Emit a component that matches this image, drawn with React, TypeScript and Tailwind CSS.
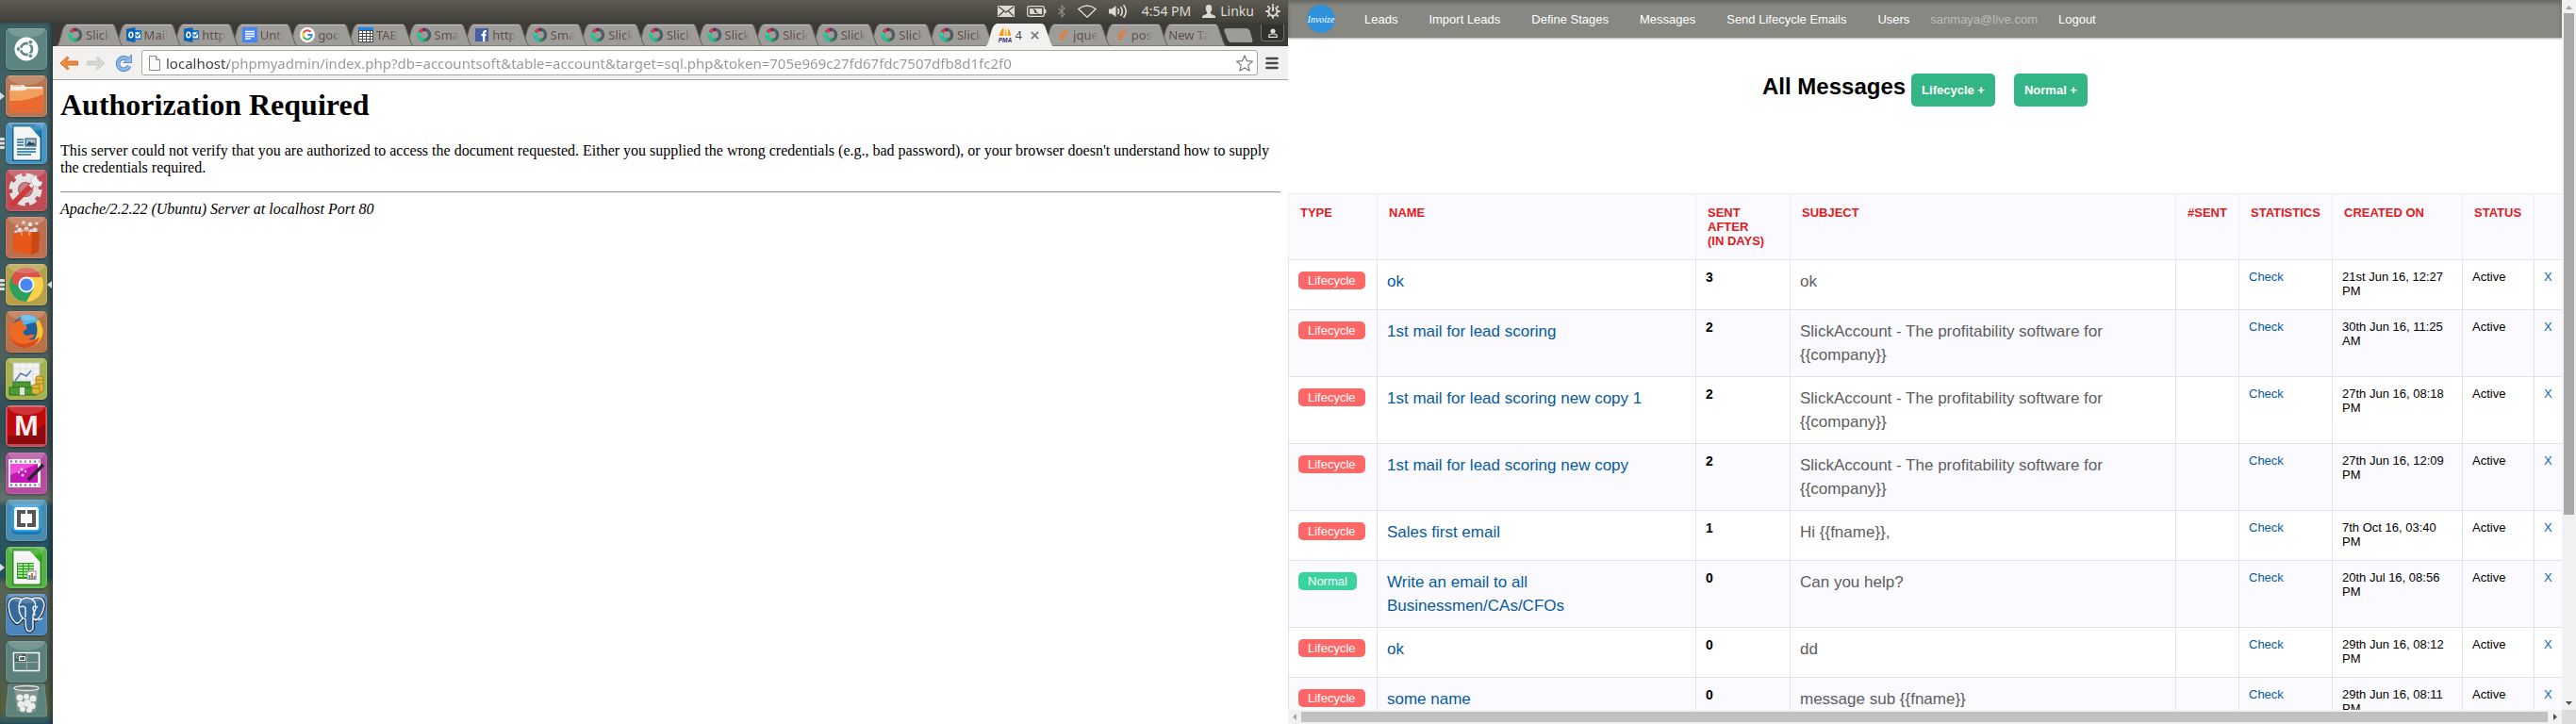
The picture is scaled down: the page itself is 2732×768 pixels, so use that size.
import type { ReactNode } from "react";

const UI = "font-['Noto_Sans','Open_Sans',sans-serif]";

/* ---------- Favicons ---------- */

function RingIcon() {
  return (
    <svg viewBox="0 0 16 16" className="size-4 shrink-0" fill="none" strokeWidth="3.4" aria-hidden="true">
      <circle cx="8" cy="8" r="5.6" stroke="#4a5e68" />
      <path d="M8 13.6A5.6 5.6 0 0 1 2.4 8" stroke="#1fc79b" />
      <path d="M2.4 8A5.6 5.6 0 0 1 3.2 5.1" stroke="#26d6a4" />
      <path d="M3.2 5.1A5.6 5.6 0 0 1 6.6 2.6" stroke="#e8304f" />
      <path d="M6.6 2.6A5.6 5.6 0 0 1 9 2.5" stroke="#6b2350" />
      <path d="M7 13.5A5.6 5.6 0 0 0 10 13.2" stroke="#2a9c62" />
    </svg>
  );
}

function OutlookIcon() {
  return (
    <svg viewBox="0 0 16 16" className="size-4 shrink-0" aria-hidden="true">
      <rect x="7" y="3" width="9" height="10" fill="#1173c7" />
      <path d="M8.5 5.2h6.5v6.2H8.500z" fill="#fff" />
      <path d="M10 7.500l1.800 1.800L15 5.600" stroke="#1173c7" strokeWidth="1.400" fill="none" />
      <path d="M0 1.800L9.500 0v16L0 14.200z" fill="#0a64b4" />
      <ellipse cx="4.800" cy="8" rx="2" ry="2.700" stroke="#fff" strokeWidth="1.500" fill="none" />
    </svg>
  );
}

function DocIcon() {
  return (
    <svg viewBox="0 0 16 16" className="size-4 shrink-0" aria-hidden="true">
      <rect width="16" height="16" fill="#4486f5" />
      <path d="M3 4.500h10M3 7h10M3 9.500h10M3 12h6" stroke="#fff" strokeWidth="1.300" />
    </svg>
  );
}

function GoogleIcon() {
  return (
    <svg viewBox="0 0 16 16" className="size-4 shrink-0" fill="none" strokeWidth="2" aria-hidden="true">
      <circle cx="8" cy="8" r="8" fill="#fff" />
      <path d="M11.400 4.700A4.700 4.700 0 0 0 3.900 5.700" stroke="#ea4335" />
      <path d="M3.900 5.700A4.700 4.700 0 0 0 3.900 10.300" stroke="#fbbc05" />
      <path d="M3.900 10.300A4.700 4.700 0 0 0 11 11.600" stroke="#34a853" />
      <path d="M11 11.600A4.700 4.700 0 0 0 12.700 8H8.200" stroke="#4285f4" />
    </svg>
  );
}

function TableIcon() {
  return (
    <svg viewBox="0 0 16 16" className="size-4 shrink-0" aria-hidden="true">
      <rect width="16" height="16" fill="#4c4c4c" />
      <rect width="16" height="3" fill="#1c86ee" />
      {[4, 7, 10, 13].map((y) =>
        [1, 5, 9, 13].map((x) => <rect key={`${x}-${y}`} x={x} y={y} width={x === 13 ? 2 : 3} height="2" fill="#fff" />)
      )}
    </svg>
  );
}

function FacebookIcon() {
  return (
    <svg viewBox="0 0 16 16" className="size-4 shrink-0" aria-hidden="true">
      <rect x="1" y="1" width="14" height="14" fill="#4560a5" />
      <path d="M13 4.200h-1.500q-1.300 0-1.300 1.400V15M7.500 8.200h5" stroke="#fff" strokeWidth="2.200" fill="none" />
    </svg>
  );
}

function PmaIcon() {
  return (
    <svg viewBox="0 0 16 16" className="size-4 shrink-0" aria-hidden="true">
      <path d="M6.500 0v9H1.500C2.500 5 4.500 2 6.500 0z" fill="#f89c0e" />
      <path d="M8 1c1.500 2 2 5 2 8H7.500z" fill="#fbb743" />
      <path d="M11 1c2 2 3 5 3 8h-3z" fill="#f89c0e" />
      <text x="8" y="15.500" fontSize="6.500" fontWeight="bold" fontStyle="italic" textAnchor="middle" fill="#2d2f73" fontFamily="Liberation Sans, sans-serif">PMA</text>
    </svg>
  );
}

function StackIcon() {
  return (
    <svg viewBox="0 0 16 16" className="size-4 shrink-0" fill="none" aria-hidden="true">
      <path d="M2.500 10v4.500h8.500V10" stroke="#a6a29e" strokeWidth="1.200" />
      <path d="M4 12.600h5.500M4.200 10.300l5.400.6M4.900 7.800l5.100 1.500M6.400 5.200l4.400 2.900M8.900 2.800l3.200 4.300M12 1.500l.9 5" stroke="#e8792a" strokeWidth="1.300" />
    </svg>
  );
}

type Tab = { icon: ReactNode; label: string; active?: boolean };

const ring = <RingIcon />;
const tabs: Tab[] = [
  { icon: ring, label: "Slick" },
  { icon: <OutlookIcon />, label: "Mail" },
  { icon: <OutlookIcon />, label: "http" },
  { icon: <DocIcon />, label: "Unti" },
  { icon: <GoogleIcon />, label: "goo" },
  { icon: <TableIcon />, label: "TAB" },
  { icon: ring, label: "Sma" },
  { icon: <FacebookIcon />, label: "http" },
  { icon: ring, label: "Sma" },
  { icon: ring, label: "Slick" },
  { icon: ring, label: "Slick" },
  { icon: ring, label: "Slick" },
  { icon: ring, label: "Slick" },
  { icon: ring, label: "Slick" },
  { icon: ring, label: "Slick" },
  { icon: ring, label: "Slick" },
  { icon: <PmaIcon />, label: "4", active: true },
  { icon: <StackIcon />, label: "jque" },
  { icon: <StackIcon />, label: "pos" },
  { icon: null, label: "New Ta" },
];

function BrowserTab({ tab, order }: { tab: Tab; order: number }) {
  return (
    <button
      type="button"
      role="tab"
      aria-selected={!!tab.active}
      className="relative flex h-6 min-w-0 flex-1 items-center text-left"
      style={{ zIndex: tab.active ? 40 : order }}
    >
      <svg viewBox="0 0 71 24" preserveAspectRatio="none" className="absolute inset-y-0 left-0 h-6 w-[calc(100%+9px)]" aria-hidden="true">
        <path
          d="M0 24C4 23 5 3 10 1Q10.500.5 12 .5H59Q61 .5 62 2.500L68 20Q69 23 71 24z"
          fill={tab.active ? "#f2f1f0" : "#9e9c99"}
          stroke={tab.active ? "#f2f1f0" : "#5f5d59"}
          strokeWidth="1"
        />
        {!tab.active && <path d="M11 1.500H60" stroke="#c2c1bf" />}
      </svg>
      <span className={`relative flex min-w-0 items-center gap-[3px] ${tab.icon ? "pl-3" : "pl-[9px]"}`}>
        {tab.icon}
        <span
          className={`overflow-hidden whitespace-nowrap text-[13px] leading-5 ${
            tab.active ? "text-[#4c4c4c]" : "bg-[linear-gradient(to_right,#5b4c44_65%,#9e9c99)] bg-clip-text text-transparent"
          } ${tab.icon ? "max-w-[29px]" : "max-w-12"}`}
        >
          {tab.label}
        </span>
        {tab.active && (
          <svg viewBox="0 0 9 9" className="ml-[6px] size-[9px] shrink-0" stroke="#7b7b7b" strokeWidth="1.800" aria-hidden="true">
            <path d="M.8.8l7.400 7.400M8.200.8L.8 8.200" />
          </svg>
        )}
      </span>
    </button>
  );
}

/* ---------- Launcher ---------- */

function Page({ dark, mid }: { dark: string; mid: string }) {
  return (
    <>
      <path d="M7 2h24l7 7v32H7z" fill={dark} />
      <path d="M9 5h17l10 11v23H9z" fill="#f4f4f4" stroke="#fff" />
      <path d="M24 3h13v12z" fill={mid} />
    </>
  );
}

const launcher: { name: string; tile: string; pips?: number; focus?: boolean; art: ReactNode }[] = [
  {
    name: "Dash",
    tile: "bg-[#5c8581]",
    art: (
      <g fill="none">
        <circle cx="22" cy="22" r="12.500" fill="#fff" />
        <circle cx="22" cy="22" r="6" stroke="#648b87" strokeWidth="2.800" />
        <path d="M22 22L12 22M22 22l5-9M22 22l5 9" stroke="#fff" strokeWidth="1.500" />
        <circle cx="22" cy="22" r="4.200" fill="#fff" />
        <g fill="#648b87" stroke="#fff" strokeWidth="1">
          <circle cx="13.500" cy="22" r="2.400" />
          <circle cx="26.300" cy="14.700" r="2.400" />
          <circle cx="26.300" cy="29.300" r="2.400" />
        </g>
      </g>
    ),
  },
  {
    name: "Files",
    tile: "bg-[#b87650]",
    pips: 1,
    art: (
      <>
        <path d="M5 10h14l2 2h18v8H5z" fill="#f3efec" />
        <path d="M7 11h10" stroke="#f1b9a0" strokeWidth="2" />
        <path d="M4 16h16l3-2h17l-1 25H5z" fill="#f3a05e" />
        <path d="M4.500 27Q22 28 39.700 20L39 39H5z" fill="#ea6a30" />
        <path d="M4 16h16l3-2h17" stroke="#fbc49a" fill="none" />
      </>
    ),
  },
  {
    name: "Writer",
    tile: "bg-[#4795c2]",
    pips: 3,
    art: (
      <>
        <Page dark="#14618f" mid="#1a7db8" />
        <path d="M12 18h7M12 21h7M12 24h7M12 28h20M12 31h20M12 34h15" stroke="#1b6a9a" strokeWidth="1.500" />
        <rect x="21" y="17" width="11" height="8" fill="#8cc8ee" stroke="#1c4d6e" />
        <path d="M22 24l3-4 3 2 2-1 1 3z" fill="#333f43" />
        <circle cx="29" cy="19.500" r="1.200" fill="#f7b733" />
      </>
    ),
  },
  {
    name: "System Settings",
    tile: "bg-[#bd4c55]",
    art: (
      <>
        <circle cx="21" cy="21" r="14.500" fill="none" stroke="#e3e3e3" strokeWidth="6" strokeDasharray="7.400 4" />
        <circle cx="21" cy="21" r="11" fill="none" stroke="#e3e3e3" strokeWidth="6" />
        <circle cx="21" cy="21" r="7" fill="#bd8588" />
        <path d="M8 36L27 17" stroke="#d13a3a" strokeWidth="6" strokeLinecap="round" />
        <path d="M26 18l6-6" stroke="#efefef" strokeWidth="4" />
        <path d="M33 6a6 6 0 1 0 6 7l-4-1-2-3z" fill="#f0f0f0" stroke="#aaa" strokeWidth=".6" />
      </>
    ),
  },
  {
    name: "Software Centre",
    tile: "bg-[#bd6f4f]",
    art: (
      <>
        <g fill="#d9e0e6">
          <circle cx="12" cy="10" r="1.600" /><circle cx="19" cy="6" r="1.800" /><circle cx="26" cy="8" r="2.200" />
          <circle cx="33" cy="7" r="1.600" /><circle cx="15" cy="14" r="2.500" /><circle cx="31" cy="14" r="2.600" /><circle cx="22" cy="13" r="2.400" />
          <circle cx="11" cy="16" r="1.800" /><circle cx="27" cy="15" r="2" />
        </g>
        <path d="M8 17l28-1-1 21-9 3-18-3z" fill="#e5581a" />
        <path d="M28 16l8 0-1 21-8 3z" fill="#c94814" />
        <path d="M17 20v-3q0-3 4-3t4 3v3" fill="none" stroke="#f5a06f" strokeWidth="1.500" />
      </>
    ),
  },
  {
    name: "Chrome",
    tile: "bg-[#b5a14c]",
    pips: 3,
    focus: true,
    art: (
      <>
        <circle cx="22" cy="22" r="18" fill="#fdd04a" />
        <path d="M22 22L6.400 13A18 18 0 0 0 22 40l7.800-13.500z" fill="#2da05a" />
        <path d="M22 22H8L6.400 13A18 18 0 0 1 37.600 13H22z" fill="#d9534b" />
        <path d="M6.400 13l8.600 13 7-12h15.600A18 18 0 0 0 6.400 13z" fill="#d9534b" />
        <circle cx="22" cy="22" r="8.500" fill="#f3f5f8" />
        <circle cx="22" cy="22" r="6.600" fill="#4a88ef" />
      </>
    ),
  },
  {
    name: "Firefox",
    tile: "bg-[#b87148]",
    art: (
      <>
        <circle cx="23" cy="20" r="16" fill="#1f5f9f" />
        <path d="M16 5q12-4 20 6l-10 2-9 3z" fill="#55b6e8" />
        <path d="M35 9q8 11 2 21-6 9-17 9l10-8q6-8 2-19z" fill="#fbc62f" />
        <path d="M5 12q1 2 4 1 4-4 10-4-2 2-1 5 4 1 5 3-1 3-4 4-2 4 4 5 4-2 8-1-2 4-7 5 6 2 12-3-4 13-17 12Q3 36 4 22 4 15 5 12z" fill="#ec6a24" />
        <path d="M36 28q-4 11-16 11Q8 38 5 27q8 11 19 7 8-2 12-6z" fill="#d94a1c" />
      </>
    ),
  },
  {
    name: "Accounts",
    tile: "bg-[#a5b14c]",
    art: (
      <>
        <rect x="8" y="5" width="28" height="24" fill="#f3f4f2" stroke="#b9bcb4" />
        <path d="M8 11h28M8 17h28M8 23h28M15 5v24M22 5v24M29 5v24" stroke="#d9dbd7" strokeWidth=".8" />
        <path d="M10 24l6-8 6 3 5-6" fill="none" stroke="#587ab4" strokeWidth="1.500" />
        <g fill="#4d9b35" stroke="#2b6a1d"><rect x="8" y="25" width="18" height="7" /><rect x="4" y="31" width="28" height="8" /></g>
        <path d="M15 31h5v8h-5z" fill="#e4e4e0" />
        <g fill="#e0bb3a" stroke="#a58118"><rect x="32" y="19" width="8" height="17" rx="2" /><rect x="28" y="28" width="8" height="10" rx="2" /></g>
        <path d="M32 23h8M32 27h8M28 32h8" stroke="#a58118" />
      </>
    ),
  },
  {
    name: "Mega",
    tile: "bg-[#bf4d58]",
    art: (
      <>
        <rect x="2" y="2" width="40" height="39" fill="#c3080c" />
        <path d="M2 33Q26 32 42 20v21H2z" fill="#8e090c" />
        <text x="22" y="32" fontSize="28" fontWeight="bold" textAnchor="middle" fill="#f5efef" fontFamily="Open Sans, sans-serif">M</text>
      </>
    ),
  },
  {
    name: "Screen Recorder",
    tile: "bg-[#b64c9f]",
    art: (
      <>
        <rect x="3" y="7" width="34" height="30" fill="#ececec" />
        <path d="M5 9.500h31M5 34.500h31" stroke="#777" strokeWidth="2" strokeDasharray="2 3" />
        <rect x="5" y="12" width="29" height="20" fill="#c317b5" />
        <path d="M5 12h29L5 24z" fill="#f04ddb" />
        <g fill="#ffd7fb"><circle cx="17" cy="18" r="1.500" /><circle cx="21" cy="20" r="1.200" /><circle cx="14" cy="21" r="1.200" /><circle cx="18" cy="24" r="1.500" /></g>
        <path d="M24 29L40 13" stroke="#25252b" strokeWidth="3.500" />
      </>
    ),
  },
  {
    name: "Brackets",
    tile: "bg-[#4a8bb0]",
    art: (
      <>
        <rect x="6" y="7" width="32" height="30" rx="6" fill="#1577b5" />
        <rect x="6" y="5" width="32" height="29" rx="6" fill="#2f9fe0" />
        <rect x="9" y="8" width="26" height="24" rx="3" fill="#fff" />
        <rect x="12" y="11" width="20" height="18" fill="#565656" />
        <rect x="16" y="15" width="12" height="10" fill="#fff" />
        <path d="M22 11v18" stroke="#fff" strokeWidth="2" />
      </>
    ),
  },
  {
    name: "Calc",
    tile: "bg-[#57b246]",
    pips: 1,
    art: (
      <>
        <Page dark="#258a17" mid="#2fae1c" />
        <rect x="12" y="17" width="18" height="17" fill="#2c9a20" />
        {[18, 21, 24, 27, 30].map((y) => [13, 19, 25].map((x) => <rect key={`${x}-${y}`} x={x} y={y} width="5" height="2" fill="#a4e296" />))}
        <rect x="23" y="26" width="9" height="8.500" fill="#fff" stroke="#8c8c8c" />
        <path d="M25.500 34v-4M30.500 34v-3" stroke="#3d85c9" strokeWidth="2" />
        <path d="M28 34v-6" stroke="#ef6c28" strokeWidth="2" />
      </>
    ),
  },
  {
    name: "pgAdmin",
    tile: "bg-[#4a86bd]",
    art: (
      <g fill="#35699a" stroke="#1b1f24" strokeWidth="3.500" strokeLinejoin="round">
        <path d="M16 5Q4 2 3 12q1 14 8 19 4 1 7-6z" />
        <path d="M28 5Q40 1 41 12q-2 12-9 16l-6-4z" />
        <path d="M14 13q1-9 9-9 9 1 9 11l-3 8v14q-2 4-6 2-2-2-2-12-7-2-7-14z" />
        <g stroke="#e6eef5" strokeWidth="1.500">
          <path d="M16 5Q4 2 3 12q1 14 8 19 4 1 7-6z" />
          <path d="M28 5Q40 1 41 12q-2 12-9 16l-6-4z" />
          <path d="M14 13q1-9 9-9 9 1 9 11l-3 8v14q-2 4-6 2-2-2-2-12-7-2-7-14zM15 14q5-2 6 1v10M34 14q-5-2-5 1l2 8M30 27q5 1 9-1" />
        </g>
      </g>
    ),
  },
  {
    name: "Workspace Switcher",
    tile: "bg-[#5a817b]",
    art: (
      <g fill="none">
        <rect x="8.500" y="12.500" width="27" height="19" stroke="#fff" strokeWidth="1.500" />
        <path d="M22.500 13v18M9 22.500h26" stroke="#a6a9a8" />
        <rect x="9.500" y="13.500" width="12" height="8.500" fill="#44605e" />
        <rect x="11.500" y="15" width="5" height="3" stroke="#8fa3a1" />
        <rect x="14.500" y="16.500" width="6" height="4" stroke="#fff" />
      </g>
    ),
  },
];

function Launcher() {
  return (
    <nav
      aria-label="Launcher"
      className="relative flex w-14 shrink-0 flex-col items-center gap-[6px] overflow-hidden bg-[linear-gradient(to_bottom,#3d6266_0%,#466164_20%,#3f5a5e_33%,#52625c_47%,#33505a_55%,#3a4f55_60%,#65716a_68%,#2f5966_69%,#24505c_79%,#5a6553_80%,#4c5c55_90%,#57603f_98%,#2b5b6a_100%)] pt-[6px] shadow-[inset_-3px_0_4px_rgba(0,0,0,0.4)]"
    >
      {launcher.map((item) => (
        <div key={item.name} className="relative flex w-full shrink-0 justify-center">
          <button
            type="button"
            aria-label={item.name}
            className={`size-11 rounded-[5px] shadow-[inset_0_0_0_1px_rgba(255,255,255,0.14),0_1px_3px_rgba(0,0,0,0.4)] ${item.tile}`}
          >
            <svg viewBox="0 0 44 44" className="size-11 rounded-[5px]" aria-hidden="true">
              {item.art}
              <ellipse cx="22" cy="0" rx="20" ry="10" fill="#fff" opacity=".18" />
            </svg>
          </button>
          {item.pips === 1 && (
            <svg viewBox="0 0 5 8" className="absolute left-0 top-[18px] h-2 w-[5px]" aria-hidden="true"><path d="M0 0l5 4-5 4z" fill="#dcdcdc" /></svg>
          )}
          {item.pips === 3 && (
            <svg viewBox="0 0 5 12" className="absolute left-0 top-4 h-3 w-[5px]" aria-hidden="true"><path d="M0 1.500h4M0 6h4M0 10.500h4" stroke="#dcdcdc" strokeWidth="2.800" strokeLinecap="round" /></svg>
          )}
          {item.focus && (
            <svg viewBox="0 0 5 8" className="absolute right-px top-[18px] h-2 w-[5px]" aria-hidden="true"><path d="M5 0L0 4l5 4z" fill="#dcdcdc" /></svg>
          )}
        </div>
      ))}
      <button type="button" aria-label="Trash" className="-mt-[5px] h-9 w-11 shrink-0">
        <svg viewBox="0 0 44 36" className="h-9 w-11" aria-hidden="true">
          <path d="M5 0h34q2 0 2 2l3 31q0 2-2 2H2q-2 0-2-2L3 2q0-2 2-2z" fill="#5b827c" stroke="#7d9b96" strokeWidth=".8" />
          <path d="M9 5l3 24q10 5 20 0l3-24z" fill="#8b9a98" opacity=".8" />
          <ellipse cx="22" cy="5" rx="13" ry="2.500" fill="#6d7d7a" stroke="#e2e6e5" strokeWidth="1.300" />
          <g fill="#ececec">
            <circle cx="15" cy="15" r="3.500" /><circle cx="22" cy="14" r="3" /><circle cx="29" cy="16" r="3.500" />
            <circle cx="16" cy="22" r="3.500" /><circle cx="23" cy="21" r="4" /><circle cx="28" cy="24" r="3.500" /><circle cx="18" cy="27" r="3" /><circle cx="25" cy="28" r="3" />
          </g>
        </svg>
      </button>
    </nav>
  );
}

/* ---------- Left screen ---------- */

function PanelBar() {
  return (
    <header className={`flex h-6 shrink-0 items-center justify-end bg-linear-to-b from-[#5d5b51] to-[#403f3a] pr-2 text-sm leading-5 text-[#dfdbd2] ${UI}`}>
      <svg viewBox="0 0 18 12" className="h-3 w-[18px]" aria-hidden="true">
        <rect width="18" height="12" fill="#dfdbd2" />
        <path d="M1 1l8 6 8-6M1 11l5.500-5M17 11l-5.500-5" stroke="#494840" fill="none" strokeWidth="1.200" />
      </svg>
      <svg viewBox="0 0 21 12" className="ml-[13px] h-3 w-[21px]" fill="none" aria-hidden="true">
        <rect x=".7" y=".7" width="17.600" height="10.600" rx="2" stroke="#dfdbd2" strokeWidth="1.300" />
        <path d="M19.500 4v4" stroke="#dfdbd2" strokeWidth="2" />
        <rect x="3" y="3" width="13" height="6" fill="#dfdbd2" />
        <path d="M6 2.500l4.500 3-1 .8 4.500 3-6.500-2.300 1-.8z" fill="#33322e" />
      </svg>
      <svg viewBox="0 0 8 14" className="ml-3 h-[14px] w-2" fill="none" stroke="#8e8b83" strokeWidth="1.200" aria-hidden="true">
        <path d="M.5 4l6.500 6-3 3V1l3 3-6.500 6" />
      </svg>
      <svg viewBox="0 0 20 14" className="ml-[13px] h-[14px] w-5" fill="none" stroke="#dfdbd2" strokeWidth="1.300" aria-hidden="true">
        <path d="M.8 4.500Q10-2.500 19.200 4.500L10 13.200z" />
      </svg>
      <svg viewBox="0 0 20 16" className="ml-[13px] h-4 w-5" fill="none" stroke="#dfdbd2" strokeWidth="1.600" aria-hidden="true">
        <path d="M0 5.500h3L7.500 2v12L3 10.500H0z" fill="#dfdbd2" stroke="none" />
        <path d="M9.500 5q2 3 0 6M12.500 3.200q3.500 4.800 0 9.600M15.500 1.200q5.500 6.800 0 13.600" />
      </svg>
      <time className="ml-[15px]">4:54 PM</time>
      <svg viewBox="0 0 14 14" className="ml-3 h-[14px] w-[14px]" fill="#dfdbd2" aria-hidden="true">
        <path d="M7 0q3.300 0 3.300 4 0 2.500-1.500 4v1.500L14 12v2H0v-2l5.200-2.500V8Q3.700 6.500 3.700 4 3.700 0 7 0z" />
      </svg>
      <span className="ml-[5px]">Linku</span>
      <svg viewBox="0 0 16 16" className="ml-3 size-4" fill="none" stroke="#dfdbd2" aria-hidden="true">
        <path d="M5.500 4.300a4.600 4.600 0 1 0 5 0" strokeWidth="1.900" />
        <path d="M8 2.500v5.500" strokeWidth="2" />
        <path d="M4 4L2.300 2.300M12 4l1.700-1.700M3 8H.3M13 8h2.700M4 12l-1.700 1.700M12 12l1.700 1.700M8 13v2.700M8 .3V2" strokeWidth="1.900" />
      </svg>
    </header>
  );
}

function Browser() {
  return (
    <section className="flex min-w-0 flex-1 flex-col bg-white">
      <div className={`flex h-[25px] shrink-0 items-start bg-[#3c3b37] pl-1 pt-px ${UI}`}>
        <div role="tablist" className="flex min-w-0 flex-1">
          {tabs.map((tab, i) => (
            <BrowserTab key={i} tab={tab} order={tabs.length - i} />
          ))}
        </div>
        <button type="button" aria-label="New tab" className="ml-[6px] mt-[5px]">
          <svg viewBox="0 0 31 15" className="h-[15px] w-[31px]" aria-hidden="true">
            <path d="M2.500.5H24q2 0 3 2l3 10q.5 2-1 2H7.500q-2 0-3-2L.7 2.500Q.5.5 2.500.5z" fill="#9e9c99" stroke="#b5b4b1" strokeWidth=".6" />
          </svg>
        </button>
        <button type="button" aria-label="Profile" className="ml-2 mr-1 mt-px flex h-[18px] w-[25px] items-center justify-center rounded-b border border-t-0 border-[#72716b] bg-[#32312d]">
          <svg viewBox="0 0 10 10" className="size-[10px]" fill="none" stroke="#e3e1dd" strokeWidth="1.200" aria-hidden="true">
            <circle cx="5" cy="3" r="2" fill="#e3e1dd" />
            <path d="M.8 9.300V7.500q0-1.500 4.200-1.500t4.200 1.500v1.800z" />
          </svg>
        </button>
      </div>
      <div className="flex h-9 shrink-0 items-center border-b border-[#a8a6a3] bg-[#f2f1f0] px-[7px] pr-[10px]">
        <button type="button" aria-label="Back">
          <svg viewBox="0 0 20 16" className="h-4 w-5" aria-hidden="true">
            <path d="M8.500 1L1 8l7.500 7 1.500-1.500L7 10h12.500V6H7l3-3.500z" fill="#f08a3c" stroke="#c85a12" strokeWidth=".8" />
          </svg>
        </button>
        <button type="button" aria-label="Forward" className="ml-[9px]">
          <svg viewBox="0 0 20 16" className="h-4 w-5" aria-hidden="true">
            <path d="M11.500 1L19 8l-7.500 7-1.500-1.500L13 10H.5V6H13l-3-3.500z" fill="#d9d7d4" stroke="#c6c4c0" strokeWidth=".8" />
          </svg>
        </button>
        <button type="button" aria-label="Reload" className="ml-[10px]">
          <svg viewBox="0 0 18 18" className="size-[18px]" fill="none" aria-hidden="true">
            <path d="M13.500 5A6.200 6.200 0 1 0 15 12" stroke="#4a7fc0" strokeWidth="4.600" />
            <path d="M17.500 0v8.500H9z" fill="#8fb9e6" stroke="#4a7fc0" strokeWidth=".8" />
            <path d="M13.500 5A6.200 6.200 0 1 0 15 12" stroke="#8fb9e6" strokeWidth="3" />
          </svg>
        </button>
        <div className="ml-[10px] flex h-[27px] min-w-0 flex-1 items-center rounded-[3px] border border-[#aaa8a5] bg-white pl-[7px] pr-1">
          <svg viewBox="0 0 12 16" className="h-4 w-3 shrink-0" aria-hidden="true">
            <path d="M.5.5h7l4 4v11H.5z" fill="#fafafa" stroke="#8c8c8c" />
            <path d="M7.500.5v4h4" fill="#ddd" stroke="#8c8c8c" />
          </svg>
          <input
            aria-label="Address"
            readOnly
            value="localhost/phpmyadmin/index.php?db=accountsoft&table=account&target=sql.php&token=705e969c27fd67fdc7507dfb8d1fc2f0"
            className={`ml-[6px] min-w-0 flex-1 bg-[linear-gradient(to_right,#3c3c3c_66px,#979797_66px)] bg-clip-text text-[15px] leading-6 text-transparent outline-none ${UI}`}
          />
          <svg viewBox="0 0 18 18" className="size-[18px] shrink-0" fill="none" stroke="#777" strokeWidth="1.200" aria-hidden="true">
            <path d="M9 1l2.400 5.600 6 .5-4.600 4 1.400 6L9 14l-5.200 3.100 1.400-6-4.600-4 6-.5z" strokeLinejoin="round" />
          </svg>
        </div>
        <button type="button" aria-label="Menu" className="ml-2">
          <svg viewBox="0 0 14 14" className="size-[14px]" stroke="#4a4a4a" strokeWidth="2.600" strokeLinecap="round" aria-hidden="true">
            <path d="M1.500 2h11M1.500 7h11M1.500 12h11" />
          </svg>
        </button>
      </div>
      <main className="p-2 font-['Liberation_Serif',serif] text-base leading-[18px] text-black">
        <h1 className="text-[32px] font-bold leading-[37px]">Authorization Required</h1>
        <p className="mt-[21px]">
          This server could not verify that you are authorized to access the document requested. Either you supplied the wrong
          credentials (e.g., bad password), or your browser doesn't understand how to supply the credentials required.
        </p>
        <hr className="mb-2 mt-4 border-t border-b border-t-[#9a9a9a] border-b-[#eeeeee]" />
        <address className="italic">Apache/2.2.22 (Ubuntu) Server at localhost Port 80</address>
      </main>
    </section>
  );
}

/* ---------- Right screen ---------- */

type Message = { type: "Lifecycle" | "Normal"; name: string; days: number; subject: string; created: string };

const company = "SlickAccount - The profitability software for {{company}}";
const messages: Message[] = [
  { type: "Lifecycle", name: "ok", days: 3, subject: "ok", created: "21st Jun 16, 12:27 PM" },
  { type: "Lifecycle", name: "1st mail for lead scoring", days: 2, subject: company, created: "30th Jun 16, 11:25 AM" },
  { type: "Lifecycle", name: "1st mail for lead scoring new copy 1", days: 2, subject: company, created: "27th Jun 16, 08:18 PM" },
  { type: "Lifecycle", name: "1st mail for lead scoring new copy", days: 2, subject: company, created: "27th Jun 16, 12:09 PM" },
  { type: "Lifecycle", name: "Sales first email", days: 1, subject: "Hi {{fname}},", created: "7th Oct 16, 03:40 PM" },
  { type: "Normal", name: "Write an email to all Businessmen/CAs/CFOs", days: 0, subject: "Can you help?", created: "20th Jul 16, 08:56 PM" },
  { type: "Lifecycle", name: "ok", days: 0, subject: "dd", created: "29th Jun 16, 08:12 PM" },
  { type: "Lifecycle", name: "some name", days: 0, subject: "message sub {{fname}}", created: "29th Jun 16, 08:11 PM" },
];

const links = ["Leads", "Import Leads", "Define Stages", "Messages", "Send Lifecycle Emails", "Users"];
const th = "border border-r-0 border-[#ededf0] px-3 py-3 text-left align-top font-bold";
const td = "border border-r-0 border-[#e3e3e5] px-[10px] py-[10px] align-top";
const addButton = "rounded-[5px] bg-[#33b585] px-[11px] py-[10px] text-[13px] font-bold leading-[15px] text-white";

function MessagesTable() {
  return (
    <table className="w-full table-fixed border-separate border-spacing-0 text-[13px] leading-[15px] text-black [&_td]:border-b-0 [&_th]:border-b-0">
      <colgroup>
        <col className="w-[94px]" />
        <col className="w-[338px]" />
        <col className="w-[100px]" />
        <col />
        <col className="w-[67px]" />
        <col className="w-[99px]" />
        <col className="w-[138px]" />
        <col className="w-[76px]" />
        <col className="w-[30px]" />
      </colgroup>
      <thead className="bg-[#fafaff] text-[#e3191c]">
        <tr>
          <th className={th}>TYPE</th>
          <th className={th}>NAME</th>
          <th className={th}>SENT<br />AFTER<br />(IN DAYS)</th>
          <th className={th}>SUBJECT</th>
          <th className={th}>#SENT</th>
          <th className={th}>STATISTICS</th>
          <th className={th}>CREATED ON</th>
          <th className={th}>STATUS</th>
          <th className={th} aria-label="Delete" />
        </tr>
      </thead>
      <tbody>
        {messages.map((m, i) => (
          <tr key={i} className="h-[53px] even:bg-[#fafaff]">
            <td className={td}>
              <span className={`mt-[2px] inline-block rounded-[5px] px-[10px] py-[2px] text-white ${m.type === "Normal" ? "bg-[#3ad29f]" : "bg-[#ff6666]"}`}>
                {m.type}
              </span>
            </td>
            <td className={`${td} text-[17px] leading-[25px]`}><a href="#message" className="text-[#075a9c]">{m.name}</a></td>
            <td className={`${td} text-sm font-bold leading-4`}>{m.days}</td>
            <td className={`${td} text-[17px] leading-[25px] text-[#5e5e5e]`}>{m.subject}</td>
            <td className={td} />
            <td className={td}><a href="#statistics" className="text-[#075a9c]">Check</a></td>
            <td className={td}>{m.created}</td>
            <td className={td}>Active</td>
            <td className={td}><a href="#delete" className="text-[#0f66ac]">X</a></td>
          </tr>
        ))}
      </tbody>
    </table>
  );
}

function Crm() {
  return (
    <section className="grid min-w-0 flex-1 grid-cols-[minmax(0,1fr)_15px] grid-rows-[minmax(0,1fr)_15px] bg-white font-['Liberation_Sans',Arial,sans-serif]">
      <div className="min-h-0 overflow-hidden">
        <nav className="relative flex h-10 items-center bg-[#888882] pl-5 text-[13px] leading-[15px] text-white shadow-[0_1px_2px_rgba(0,0,0,0.35),inset_0_3px_4px_rgba(0,0,0,0.25)]">
          <a href="#home" className="mr-[31px] flex size-[30px] items-center justify-center rounded-full bg-[#2f90dc] font-['Liberation_Serif',serif] text-[10px] italic">
            Invoize
          </a>
          <div className="flex gap-[33px]">
            {links.map((l) => (
              <a key={l} href="#nav" className="whitespace-nowrap">{l}</a>
            ))}
          </div>
          <span className="ml-[22px] text-[#bdbdb9]">sanmaya@live.com</span>
          <a href="#logout" className="ml-[22px]">Logout</a>
        </nav>
        <div className="flex items-baseline justify-center pb-[92px] pt-[38px] text-black">
          <h1 className="text-2xl font-bold leading-7">All Messages</h1>
          <button type="button" className={`ml-[6px] ${addButton}`}>Lifecycle +</button>
          <button type="button" className={`ml-5 ${addButton}`}>Normal +</button>
        </div>
        <MessagesTable />
      </div>
      <div className="flex flex-col items-center bg-[#f1f1f1]">
        <svg viewBox="0 0 15 14" className="h-[14px] w-[15px] shrink-0" aria-hidden="true"><path d="M4 10l3.500-4 3.500 4z" fill="#a3a3a3" /></svg>
        <div className="w-[11px] basis-[532px] bg-[#a8a8a8]" />
        <svg viewBox="0 0 15 14" className="mt-auto h-[14px] w-[15px] shrink-0" aria-hidden="true"><path d="M4 5l3.500 4L11 5z" fill="#505050" /></svg>
      </div>
      <div className="flex items-center bg-[#f1f1f1]">
        <svg viewBox="0 0 14 15" className="h-[15px] w-[14px] shrink-0" aria-hidden="true"><path d="M9 4L5 7.500 9 11z" fill="#a3a3a3" /></svg>
        <div className="h-[11px] flex-1 bg-[#c1c1c1]" />
        <svg viewBox="0 0 15 15" className="size-[15px] shrink-0" aria-hidden="true"><path d="M6 4l4 3.500L6 11z" fill="#505050" /></svg>
      </div>
      <div className="bg-[#dcdcdc]" />
    </section>
  );
}

export default function App() {
  return (
    <div className="flex h-screen w-full overflow-hidden bg-white">
      <div className="flex w-1/2 flex-col overflow-hidden">
        <PanelBar />
        <div className="flex min-h-0 flex-1">
          <Launcher />
          <Browser />
        </div>
      </div>
      <Crm />
    </div>
  );
}
